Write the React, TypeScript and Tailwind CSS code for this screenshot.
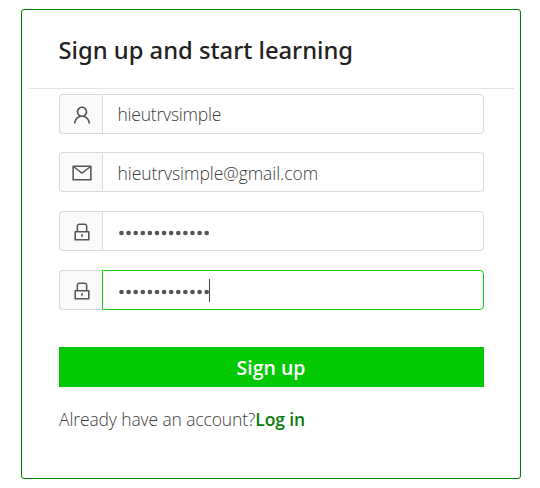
import type { ReactNode } from "react";
import { AiOutlineLock, AiOutlineMail, AiOutlineUser } from "react-icons/ai";

type FieldProps = {
  icon: ReactNode;
  focused?: boolean;
  children: ReactNode;
};

function Field({ icon, focused = false, children }: FieldProps) {
  return (
    <div className="flex h-10 w-[425px]">
      <span className="flex w-[43px] shrink-0 items-center justify-center rounded-l-[4px] border border-r-0 border-[#d9d9d9] bg-[#fafafa] pl-px pt-[2px] text-[22px] text-[#555555]">
        {icon}
      </span>
      <div
        className={`flex min-w-0 flex-1 items-center rounded-r-[4px] border bg-white pl-[14.5px] text-[17.5px] font-light text-[#404040] ${
          focused ? "border-[#14cc14]" : "border-[#d9d9d9]"
        }`}
      >
        {children}
      </div>
    </div>
  );
}

function Dots() {
  return (
    <svg className="mt-[3px] h-[6px] w-[93px] shrink-0" viewBox="0 0 93 6" fill="#555555" aria-label="Password">
      {Array.from({ length: 13 }, (_, i) => (
        <circle key={i} cx={3.5 + i * 7.1} cy={3} r={2.35} />
      ))}
    </svg>
  );
}

export default function App() {
  return (
    <div className="h-[488px] w-[540px] bg-white pl-[21px] pt-[9px] font-['Open_Sans','Noto_Sans',sans-serif]">
      <main className="flex h-[470px] w-[500px] flex-col rounded-[3px] border border-[#008000] bg-white pl-[7px] pr-[6px]">
        <header className="flex h-[79px] items-center border-b border-[#e4e4e4] pl-[29.5px] pt-[3px]">
          <h1 className="whitespace-nowrap font-['Noto_Sans'] text-[23.75px] font-medium text-[#222222]">
            Sign up and start learning
          </h1>
        </header>
        <form className="flex flex-col pl-[30px] pt-[5px]">
          <div className="mb-[18px]">
            <Field icon={<AiOutlineUser />}>
              <span className="tracking-[-0.22px]">hieutrvsimple</span>
            </Field>
          </div>
          <div className="mb-[19px]">
            <Field icon={<AiOutlineMail />}>
              <span className="pt-[2px] tracking-[-0.06px]">hieutrvsimple@gmail.com</span>
            </Field>
          </div>
          <div className="mb-[19px]">
            <Field icon={<AiOutlineLock />}>
              <Dots />
            </Field>
          </div>
          <Field icon={<AiOutlineLock />} focused>
            <Dots />
            <span className="-ml-[1.5px] h-[23px] w-px bg-[#444444]" />
          </Field>
          <button
            type="button"
            className="mt-[37px] flex h-10 w-[425px] items-center justify-center bg-[#02c902] pr-px pt-[2px] text-[19.5px] font-semibold text-white shadow-[0_2px_0_rgba(0,0,0,0.03)]"
          >
            <span>Sign up</span>
          </button>
          <p className="mt-[18px] whitespace-nowrap text-[17.5px] leading-7 font-light text-[#404040]">
            <span className="tracking-[-0.12px]">Already have an account?</span>
            <a className="font-semibold tracking-[-0.1px] text-[#087c08]">Log in</a>
          </p>
        </form>
      </main>
    </div>
  );
}
